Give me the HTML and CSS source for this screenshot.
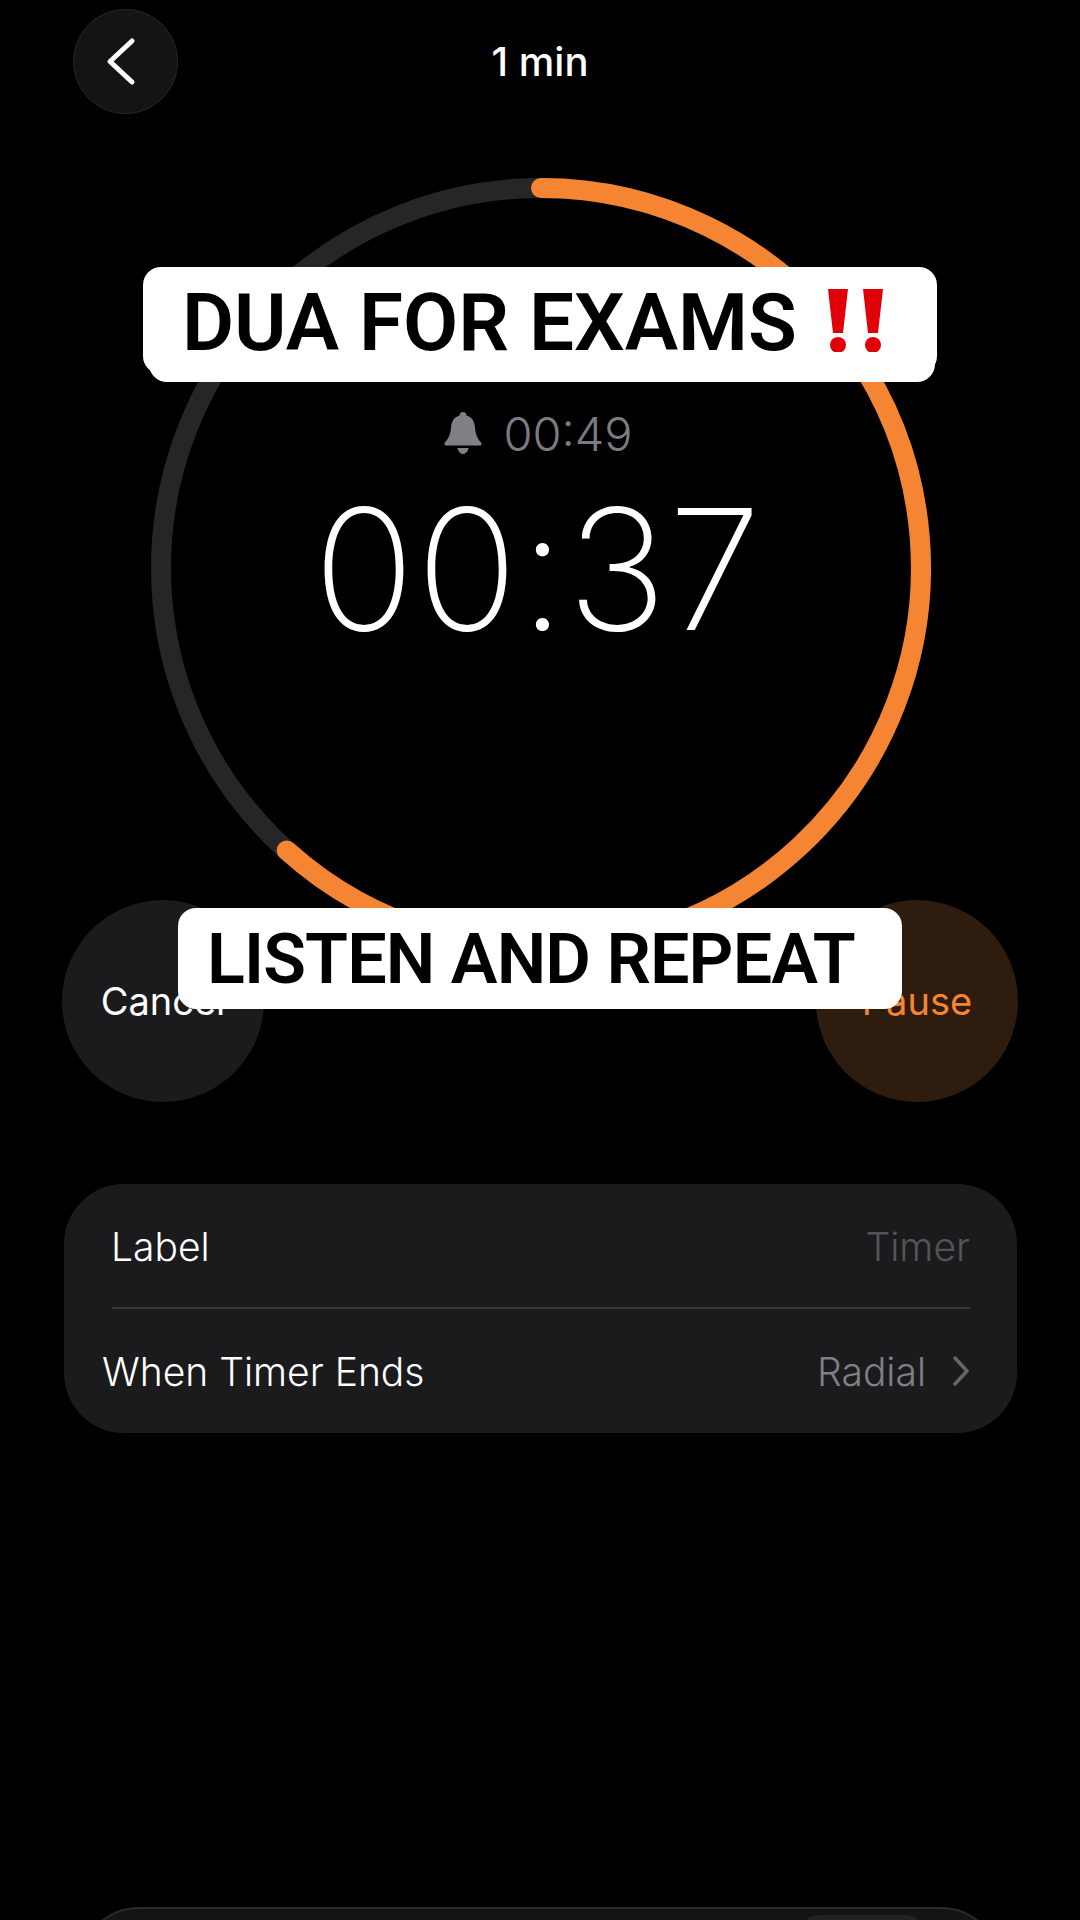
FILE: index.html
```html
<!DOCTYPE html>
<html lang="en">
<head>
    <meta charset="UTF-8">
    <meta name="viewport" content="width=device-width, initial-scale=1.0">
    <title>1 min</title>
    <link rel="stylesheet" href="styles.css">
</head>
<body>

<div class="screen">
    <header class="topbar">
        <button class="back-btn" aria-label="Back">
            <svg width="30" height="50" viewBox="0 0 30 50">
                <path d="M26 4 L4 24.5 L26 45" fill="none" stroke="#fff" stroke-width="5" stroke-linecap="round" stroke-linejoin="round"/>
            </svg>
        </button>
        <h1 class="title">1 min</h1>
    </header>

    <section class="timer">
        <svg class="ring" width="780" height="780" viewBox="0 0 780 780">
            <circle cx="390" cy="390" r="380" fill="none" stroke="#262628" stroke-width="20"/>
            <path d="M390 10 A380 380 0 1 1 135.7 672.4" fill="none" stroke="#f58532" stroke-width="20" stroke-linecap="round"/>
        </svg>
        <div class="readout">
            <div class="alarm">
                <svg width="38" height="42" viewBox="0 0 38 42">
                    <path d="M19 0c2.200 0 3.400 1.500 3.500 3.500 5.500 1.500 8 6 8.500 12 .5 7 2.500 11 6 15 1.200 1.500.5 3-1.500 3H2.500c-2 0-2.700-1.500-1.500-3 3.500-4 5.500-8 6-15 .5-6 3-10.500 8.500-12C15.600 1.500 16.800 0 19 0z" fill="#808085"/>
                    <path d="M13.500 36h11c-.5 3.500-3 6-5.500 6s-5-2.500-5.500-6z" fill="#808085"/>
                </svg>
                <span class="alarm-time">00:49</span>
            </div>
            <div class="countdown">00:37</div>
        </div>
    </section>

    <div class="actions">
        <button class="circle-btn cancel">Cancel</button>
        <button class="circle-btn pause">Pause</button>
    </div>

    <div class="settings">
        <div class="row row-label">
            <span>Label</span>
            <span class="value-dim">Timer</span>
        </div>
        <div class="divider"></div>
        <div class="row row-ends">
            <span>When Timer Ends</span>
            <span class="value">
                Radial
                <svg width="18" height="30" viewBox="0 0 18 30">
                    <path d="M3 2 L15 15 L3 28" fill="none" stroke="#666668" stroke-width="3.500" stroke-linecap="round" stroke-linejoin="round"/>
                </svg>
            </span>
        </div>
    </div>

    <div class="bottom-sheet">
        <div class="sheet-pill"></div>
    </div>

    <div class="caption caption-top">
        <span class="caption-text">DUA FOR EXAMS</span>
        <svg class="bangs" width="55" height="64" viewBox="0 0 55 64">
            <path d="M0 0h20l-5 44H5z" fill="#e00008"/>
            <circle cx="10" cy="56" r="8" fill="#e00008"/>
            <path d="M35 0h20l-5 44H40z" fill="#e00008"/>
            <circle cx="45" cy="56" r="8" fill="#e00008"/>
        </svg>
    </div>
    <div class="caption caption-bottom">LISTEN AND REPEAT</div>
</div>

</body>
</html>
```

FILE: styles.css
```css
* {
    box-sizing: border-box;
}

body {
    margin: 0;
    background-color: #000;
    font-family: 'Inter', sans-serif;
}

.screen {
    position: relative;
    width: 1080px;
    height: 1920px;
    overflow: hidden;
    background-color: #000;
    color: #fff;
}

button {
    border: none;
    padding: 0;
    font: inherit;
}

.topbar {
    display: grid;
    grid-template-columns: 1fr auto 1fr;
    align-items: center;
    padding: 9px 73px 0;
}

.back-btn {
    display: flex;
    align-items: center;
    justify-content: flex-start;
    width: 105px;
    height: 105px;
    padding-left: 33px;
    border-radius: 50%;
    background-color: #141416;
    box-shadow: inset 0 0 0 1px #232325;
}

.title {
    margin: 0;
    font-size: 40px;
    font-weight: 500;
}

.timer {
    display: grid;
    width: 780px;
    height: 780px;
    margin: 64px 0 0 151px;
}

.ring,
.readout {
    grid-area: 1 / 1;
}

.readout {
    display: flex;
    flex-direction: column;
    align-items: center;
    padding-top: 234px;
}

.alarm {
    display: flex;
    align-items: center;
    gap: 21px;
    height: 42px;
    margin-right: 5px;
    color: #7c7c80;
}

.alarm-time {
    font-size: 47px;
    font-weight: 300;
}

.countdown {
    margin: 31px 6px 0 0;
    font-size: 168px;
    font-weight: 200;
    line-height: 1;
    letter-spacing: 1.5px;
}

.actions {
    display: flex;
    justify-content: space-between;
    margin: -58px 62px 0;
}

.circle-btn {
    width: 202px;
    height: 202px;
    border-radius: 50%;
    font-size: 38px;
}

.cancel {
    background-color: #1b1b1d;
    color: #fff;
}

.pause {
    background-color: #2e1c0f;
    color: #f58532;
}

.settings {
    margin: 82px 63px 0 64px;
    height: 249px;
    border-radius: 60px;
    background-color: #1b1b1d;
    font-size: 39px;
    font-weight: 350;
}

.row {
    display: flex;
    align-items: center;
    justify-content: space-between;
}

.row-label {
    height: 123px;
    padding: 2px 47px 0 47px;
}

.row-ends {
    height: 124px;
    padding: 0 47px 0 38px;
}

.divider {
    height: 2px;
    margin: 0 47px 0 48px;
    background-color: #38383a;
}

.value-dim {
    color: #555557;
}

.value {
    display: flex;
    align-items: center;
    gap: 26px;
    color: #808084;
}

.bottom-sheet {
    display: flex;
    justify-content: flex-end;
    height: 60px;
    margin: 474px 79px 0 79px;
    padding: 8px 76px 0 0;
    border-radius: 68px 68px 0 0;
    background-color: #141414;
    box-shadow: inset 0 2px 0 #2a2a2a;
}

.sheet-pill {
    width: 126px;
    height: 40px;
    border-radius: 20px 20px 0 0;
    background-color: #232323;
}

/* text stickers on top of the screen */
.caption {
    position: absolute;
    display: flex;
    align-items: center;
    background-color: #fff;
    border-radius: 18px;
    color: #000;
    font-family: 'Roboto', sans-serif;
    font-weight: 650;
}

.caption-top {
    left: 143px;
    top: 267px;
    width: 794px;
    height: 107px;
    padding-left: 39px;
    font-size: 80px;
}

.caption-text {
    padding-top: 4px;
}

/* the second sticker layer peeks out under the first */
.caption-top::after {
    content: "";
    position: absolute;
    left: 6px;
    right: 2px;
    bottom: -8px;
    height: 30px;
    border-radius: 0 0 18px 18px;
    background-color: #fff;
}

.bangs {
    margin-left: 31px;
}

.caption-bottom {
    left: 178px;
    top: 908px;
    width: 724px;
    height: 101px;
    padding-left: 29px;
    font-size: 70px;
    letter-spacing: -0.9px;
}
```
